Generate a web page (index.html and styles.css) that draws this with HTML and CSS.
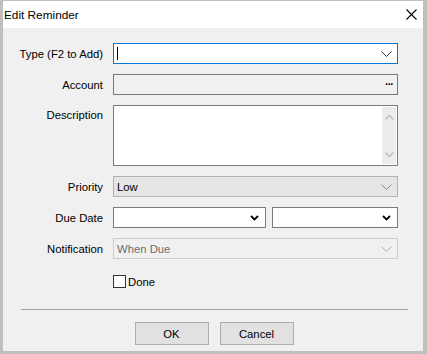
FILE: index.html
```html
<!DOCTYPE html>
<html>

<head>
    <title>Edit Reminder</title>
    <link rel="stylesheet" href="styles.css">
</head>

<body>

    <div class="window">
        <div class="titlebar">
            <span class="title">Edit Reminder</span>
            <svg class="close" width="11" height="11" viewBox="0 0 11 11">
                <path d="M0.5 0.5 L10.5 10.5 M10.5 0.5 L0.5 10.5" stroke="#000" stroke-width="1.1" fill="none"/>
            </svg>
        </div>

        <div class="content">
            <div class="form">
                <label class="lbl">Type (F2 to Add)</label>
                <div class="field combo focused">
                    <span class="caret"></span>
                    <svg class="chev" width="11" height="6" viewBox="0 0 11 6">
                        <polyline points="0.5,0.5 5.5,5.5 10.5,0.5" stroke="#333" fill="none"/>
                    </svg>
                </div>

                <label class="lbl">Account</label>
                <div class="field readonly">
                    <span class="dots">&middot;&middot;&middot;</span>
                </div>

                <label class="lbl top">Description</label>
                <div class="field memo">
                    <div class="scroll">
                        <svg width="9" height="5" viewBox="0 0 9 5">
                            <polyline points="0.5,4.5 4.5,0.5 8.5,4.5" stroke="#bdbdbd" stroke-width="1.4" fill="none"/>
                        </svg>
                        <svg width="9" height="5" viewBox="0 0 9 5">
                            <polyline points="0.5,0.5 4.5,4.5 8.5,0.5" stroke="#bdbdbd" stroke-width="1.4" fill="none"/>
                        </svg>
                    </div>
                </div>

                <label class="lbl">Priority</label>
                <div class="field combo disabled">
                    <span class="val">Low</span>
                    <svg class="chev" width="11" height="6" viewBox="0 0 11 6">
                        <polyline points="0.5,0.5 5.5,5.5 10.5,0.5" stroke="#8a8a8a" fill="none"/>
                    </svg>
                </div>

                <label class="lbl">Due Date</label>
                <div class="dates">
                    <div class="field combo">
                        <svg class="chev" width="9" height="6" viewBox="0 0 9 6">
                            <polyline points="1,1 4.5,4.5 8,1" stroke="#000" stroke-width="1.8" fill="none"/>
                        </svg>
                    </div>
                    <div class="field combo">
                        <svg class="chev" width="9" height="6" viewBox="0 0 9 6">
                            <polyline points="1,1 4.5,4.5 8,1" stroke="#000" stroke-width="1.8" fill="none"/>
                        </svg>
                    </div>
                </div>

                <label class="lbl">Notification</label>
                <div class="field combo inactive">
                    <span class="val">When Due</span>
                    <svg class="chev" width="11" height="6" viewBox="0 0 11 6">
                        <polyline points="0.5,0.5 5.5,5.5 10.5,0.5" stroke="#b0b0b0" fill="none"/>
                    </svg>
                </div>

                <span></span>
                <div class="check">
                    <span class="box"></span>
                    <span>Done</span>
                </div>
            </div>

            <hr class="sep">

            <div class="buttons">
                <div class="btn">OK</div>
                <div class="btn">Cancel</div>
            </div>
        </div>
    </div>

</body>

</html>
```

FILE: styles.css
```css
body {
    margin: 0;
    background: #bfbfbf;
    font-family: 'Liberation Sans', Arial, sans-serif;
    font-size: 11.3px;
    color: #000;
}

.window {
    margin: 1px 4px 3px 3px;
    height: 350px;
    display: flex;
    flex-direction: column;
}

.titlebar {
    height: 27px;
    background: #ffffff;
    display: flex;
    align-items: center;
    justify-content: space-between;
    padding: 0 6px 0 1px;
}

.title {
    font-size: 11.8px;
}

.content {
    flex: 1;
    background: #f0f0f0;
    padding-top: 15px;
}

.form {
    display: grid;
    grid-template-columns: 100px 285px;
    column-gap: 10px;
    row-gap: 10px;
    grid-template-rows: 21px 21px 61px 21px 21px 21px 13px;
}

.lbl {
    text-align: right;
    align-self: center;
    color: #000;
}

.lbl.top {
    align-self: start;
    padding-top: 4px;
}

.field {
    box-sizing: border-box;
    height: 100%;
    border: 1px solid #7a7a7a;
    background: #ffffff;
    display: flex;
    align-items: center;
    padding: 0 3px;
}

.field .chev {
    margin-left: auto;
    margin-right: 2px;
}

.focused {
    border-color: #0078d7;
}

.caret {
    width: 1px;
    height: 13px;
    background: #000;
}

.readonly {
    background: #f0f0f0;
}

.dots {
    margin-left: auto;
    margin-right: 1px;
    font-weight: bold;
    font-size: 11px;
    letter-spacing: -1px;
    line-height: 1;
}

.memo {
    align-items: stretch;
    padding: 1px;
    justify-content: flex-end;
}

.scroll {
    width: 14px;
    background: #ececec;
    display: flex;
    flex-direction: column;
    justify-content: space-between;
    align-items: center;
    padding: 8px 0 7px;
}

.disabled {
    background: #e5e5e5;
    border-color: #b3b3b3;
}

.inactive {
    background: #f0f0f0;
    border-color: #cccccc;
    color: #6d6d6d;
}

.dates {
    display: grid;
    grid-template-columns: 153px 126px;
    column-gap: 6px;
}

.dates .chev {
    margin-right: 3px;
}

.check {
    display: flex;
    align-items: center;
    gap: 2px;
    margin-top: 6px;
    height: 13px;
}

.box {
    box-sizing: border-box;
    width: 13px;
    height: 13px;
    border: 1px solid #333333;
    background: #ffffff;
}

.sep {
    margin: 27px 15px 0 18px;
    border: none;
    border-top: 1px solid #a0a0a0;
    height: 0;
}

.buttons {
    display: flex;
    justify-content: center;
    gap: 11px;
    margin-top: 12px;
    padding-left: 2px;
}

.btn {
    box-sizing: border-box;
    width: 74px;
    height: 23px;
    background: #e1e1e1;
    border: 1px solid #adadad;
    display: flex;
    align-items: center;
    justify-content: center;
}
```
